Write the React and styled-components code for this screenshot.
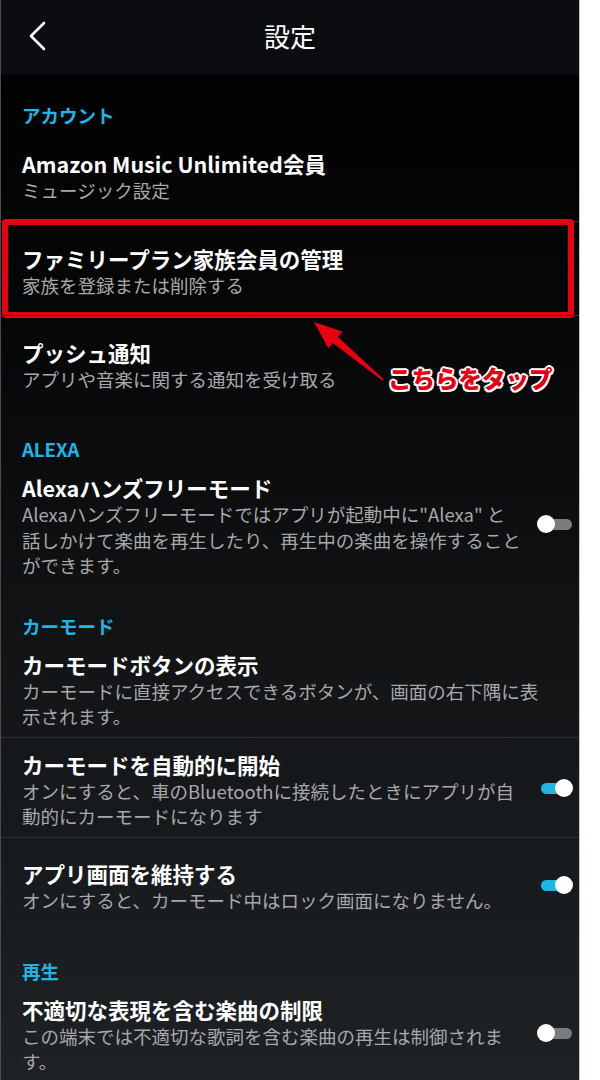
import React from "react";
import styled, { createGlobalStyle } from "styled-components";

const FONT = `"Noto Sans CJK JP", "Noto Sans", sans-serif`;
const CYAN = "#1fb6e6";
const RED = "#e60012";

const GlobalStyle = createGlobalStyle`
  html, body {
    margin: 0;
    padding: 0;
    background: #ffffff;
  }
  body {
    font-family: ${FONT};
  }
`;

const sections = [
  {
    label: "アカウント",
    items: [
      { title: "Amazon Music Unlimited会員", desc: ["ミュージック設定"] },
      { title: "ファミリープラン家族会員の管理", desc: ["家族を登録または削除する"], highlight: true },
      { title: "プッシュ通知", desc: ["アプリや音楽に関する通知を受け取る"] },
    ],
  },
  {
    label: "ALEXA",
    items: [
      {
        title: "Alexaハンズフリーモード",
        desc: [
          "Alexaハンズフリーモードではアプリが起動中に\"Alexa\" と",
          "話しかけて楽曲を再生したり、再生中の楽曲を操作すること",
          "ができます。",
        ],
        toggle: false,
      },
    ],
  },
  {
    label: "カーモード",
    items: [
      {
        title: "カーモードボタンの表示",
        desc: ["カーモードに直接アクセスできるボタンが、画面の右下隅に表", "示されます。"],
      },
      {
        title: "カーモードを自動的に開始",
        desc: ["オンにすると、車のBluetoothに接続したときにアプリが自", "動的にカーモードになります"],
        toggle: true,
      },
      {
        title: "アプリ画面を維持する",
        desc: ["オンにすると、カーモード中はロック画面になりません。"],
        toggle: true,
      },
    ],
  },
  {
    label: "再生",
    items: [
      {
        title: "不適切な表現を含む楽曲の制限",
        desc: ["この端末では不適切な歌詞を含む楽曲の再生は制御されま", "す。"],
        toggle: false,
      },
    ],
  },
];

const App = () => {
  return (
    <>
      <GlobalStyle />
      <Page>
        <Screen>
          <Header>
            <BackButton aria-label="戻る">
              <svg width="20" height="30" viewBox="0 0 20 30" fill="none">
                <path d="M16 2 L3 15 L16 28" stroke="#ffffff" strokeWidth="2.6" strokeLinecap="round" strokeLinejoin="round" />
              </svg>
            </BackButton>
            <HeaderTitle>設定</HeaderTitle>
            <span />
          </Header>

          <Content>
            {sections.map((section) => (
              <Section key={section.label}>
                <SectionLabel>{section.label}</SectionLabel>
                {section.items.map((item) => (
                  <Item key={item.title}>
                    <ItemText>
                      <ItemTitle>{item.title}</ItemTitle>
                      <ItemDesc>
                        {item.desc.map((line, i) => (
                          <span key={i}>
                            {line}
                            {i < item.desc.length - 1 && <br />}
                          </span>
                        ))}
                      </ItemDesc>
                    </ItemText>
                    {item.toggle !== undefined && <Toggle $on={item.toggle} />}
                    {item.highlight && <Highlight />}
                  </Item>
                ))}
              </Section>
            ))}
          </Content>

          {/* annotation over the screenshot */}
          <Arrow width="90" height="80" viewBox="0 0 90 80">
            <polygon
              points="13,12 41.5,21.6 37,26.9 82.6,69.2 81.4,70.8 31.8,33.1 27.3,38.4"
              fill={RED}
            />
          </Arrow>
          <Callout>こちらをタップ</Callout>
        </Screen>
      </Page>
    </>
  );
};

const Page = styled.div`
  width: 600px;
  height: 1080px;
  overflow: hidden;
  background: #ffffff;
`;

const Screen = styled.div`
  position: relative;
  width: 578px;
  height: 1080px;
  border-left: 1px solid #4a4c4f;
  border-right: 1px solid #c4c4c4;
  background: linear-gradient(180deg, #000000 0px, #050606 300px, #121416 650px, #1e2225 1080px);
  overflow: hidden;
`;

const Header = styled.header`
  height: 75px;
  background: #0c0d10;
  display: grid;
  grid-template-columns: 70px 1fr 70px;
  align-items: center;
`;

const BackButton = styled.button`
  background: none;
  border: none;
  padding: 0 0 4px 27px;
  display: flex;
  align-items: center;
  height: 75px;
  cursor: pointer;
`;

const HeaderTitle = styled.h1`
  margin: 0;
  text-align: center;
  color: #ffffff;
  font-family: ${FONT};
  font-size: 26px;
  font-weight: 400;
  line-height: 72px;
  padding-bottom: 3px;
`;

const Content = styled.main`
  display: flex;
  flex-direction: column;
`;

const Section = styled.section`
  padding-top: 28px;
`;

const SectionLabel = styled.h2`
  margin: 0;
  padding-left: 21px;
  color: ${CYAN};
  font-family: ${FONT};
  font-size: 18.5px;
  font-weight: 700;
  line-height: 24px;
`;

const Item = styled.div`
  position: relative;
  display: flex;
  align-items: center;
  gap: 12px;
  min-height: 94px;
  box-sizing: border-box;
  padding: 12px 6px 7px 21px;

  & + & {
    border-top: 1px solid #2e3236;
  }
`;

const ItemText = styled.div`
  flex: 1;
  min-width: 0;
`;

const ItemTitle = styled.div`
  color: #ffffff;
  font-family: ${FONT};
  font-size: 21.5px;
  font-weight: 700;
  line-height: 29px;
  white-space: nowrap;
`;

const ItemDesc = styled.div`
  color: #a6a8aa;
  font-family: ${FONT};
  font-size: 18.5px;
  font-weight: 400;
  line-height: 25.5px;
  white-space: nowrap;
`;

const Toggle = styled.span`
  position: relative;
  flex: none;
  width: 36px;
  height: 18px;
  margin-top: -4px;

  &::before {
    content: "";
    position: absolute;
    left: 4px;
    right: 1px;
    top: 4px;
    height: 11px;
    border-radius: 6px;
    background: ${(p) => (p.$on ? CYAN : "#7a7c7e")};
  }

  &::after {
    content: "";
    position: absolute;
    top: 0;
    left: ${(p) => (p.$on ? "18px" : "0")};
    width: 18px;
    height: 18px;
    border-radius: 50%;
    background: #ffffff;
  }
`;

const Highlight = styled.span`
  position: absolute;
  top: -3px;
  bottom: -3px;
  left: 1px;
  right: 5px;
  border: 6px solid ${RED};
  border-radius: 4px;
  pointer-events: none;
`;

const Arrow = styled.svg`
  position: absolute;
  left: 300px;
  top: 310px;
  filter: drop-shadow(1px 1px 1px rgba(0, 0, 0, 0.5));
`;

const Callout = styled.div`
  position: absolute;
  left: 387px;
  top: 363px;
  color: ${RED};
  font-family: ${FONT};
  font-size: 23.5px;
  font-weight: 900;
  line-height: 30px;
  white-space: nowrap;
  text-shadow:
    2px 0 0 #fff, -2px 0 0 #fff, 0 2px 0 #fff, 0 -2px 0 #fff,
    1.5px 1.5px 0 #fff, -1.5px 1.5px 0 #fff, 1.5px -1.5px 0 #fff, -1.5px -1.5px 0 #fff;
`;

export default App;
